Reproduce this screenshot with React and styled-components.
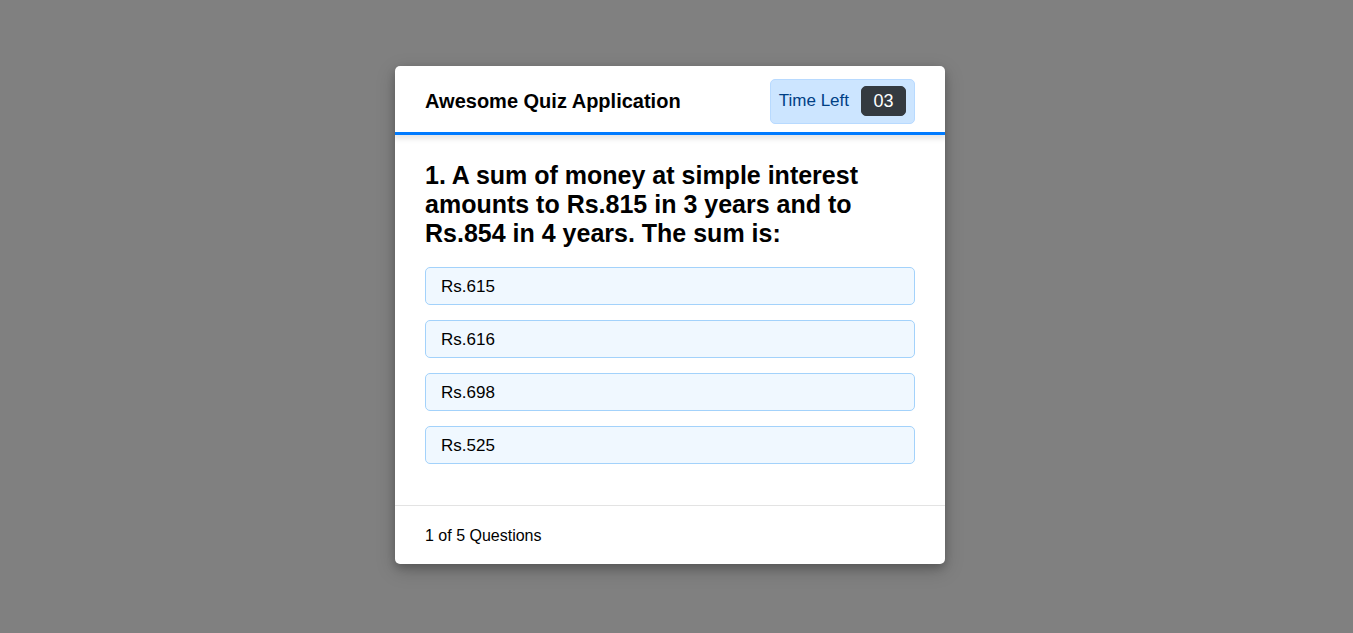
import styled, { createGlobalStyle } from "styled-components";

const GlobalStyle = createGlobalStyle`
  * {
    box-sizing: border-box;
  }
  body {
    margin: 0;
    background: #808080;
    font-family: "Liberation Sans", Arial, sans-serif;
  }
`;

const Page = styled.div`
  height: 100vh;
  padding: 0 13px 3px 0;
  display: flex;
  align-items: center;
  justify-content: center;
`;

const QuizBox = styled.div`
  width: 550px;
  background: #fff;
  border-radius: 5px;
  box-shadow: 0 4px 8px 0 rgba(0, 0, 0, 0.2), 0 6px 20px 0 rgba(0, 0, 0, 0.19);
  overflow: hidden;
`;

const Header = styled.header`
  position: relative;
  z-index: 1;
  height: 69px;
  padding: 4px 30px 0;
  display: flex;
  align-items: center;
  justify-content: space-between;
  border-bottom: 3px solid #007bff;
  box-shadow: 0 3px 5px 1px rgba(0, 0, 0, 0.1);
`;

const Title = styled.div`
  font-size: 20px;
  font-weight: 600;
  color: #000;
`;

const Timer = styled.div`
  height: 45px;
  padding: 0 8px;
  display: flex;
  align-items: center;
  gap: 12px;
  color: #004085;
  background: #cce5ff;
  border: 1px solid #b8daff;
  border-radius: 5px;
  font-size: 17px;
`;

const TimerSec = styled.div`
  width: 45px;
  height: 30px;
  display: flex;
  align-items: center;
  justify-content: center;
  color: #fff;
  background: #343a40;
  border: 1px solid #343a40;
  border-radius: 5px;
  font-size: 18px;
`;

const Section = styled.section`
  padding: 26px 30px 26px;
`;

const Question = styled.div`
  font-size: 25px;
  font-weight: 600;
  line-height: 29px;
  color: #000;
`;

const OptionList = styled.div`
  margin-top: 19px;
  display: flex;
  flex-direction: column;
  gap: 15px;
  padding-bottom: 15px;
`;

const Option = styled.div`
  height: 38px;
  padding: 2px 15px 0;
  display: flex;
  align-items: center;
  background: aliceblue;
  border: 1px solid #a3d2fb;
  border-radius: 5px;
  font-size: 17px;
  color: #000;
  cursor: pointer;
`;

const Footer = styled.footer`
  height: 59px;
  padding: 2px 30px 0;
  display: flex;
  align-items: center;
  border-top: 1px solid #e3e3e3;
  font-size: 16px;
  color: #000;
`;

const options = ["Rs.615", "Rs.616", "Rs.698", "Rs.525"];

const App = () => {
  return (
    <>
      <GlobalStyle />
      <Page>
        <QuizBox>
          <Header>
            <Title>Awesome Quiz Application</Title>
            <Timer>
              Time Left
              <TimerSec>03</TimerSec>
            </Timer>
          </Header>
          <Section>
            <Question>
              1. A sum of money at simple interest amounts to Rs.815 in 3 years
              and to Rs.854 in 4 years. The sum is:
            </Question>
            <OptionList>
              {options.map((opt) => (
                <Option key={opt}>{opt}</Option>
              ))}
            </OptionList>
          </Section>
          <Footer>1 of 5 Questions</Footer>
        </QuizBox>
      </Page>
    </>
  );
};

export default App;
